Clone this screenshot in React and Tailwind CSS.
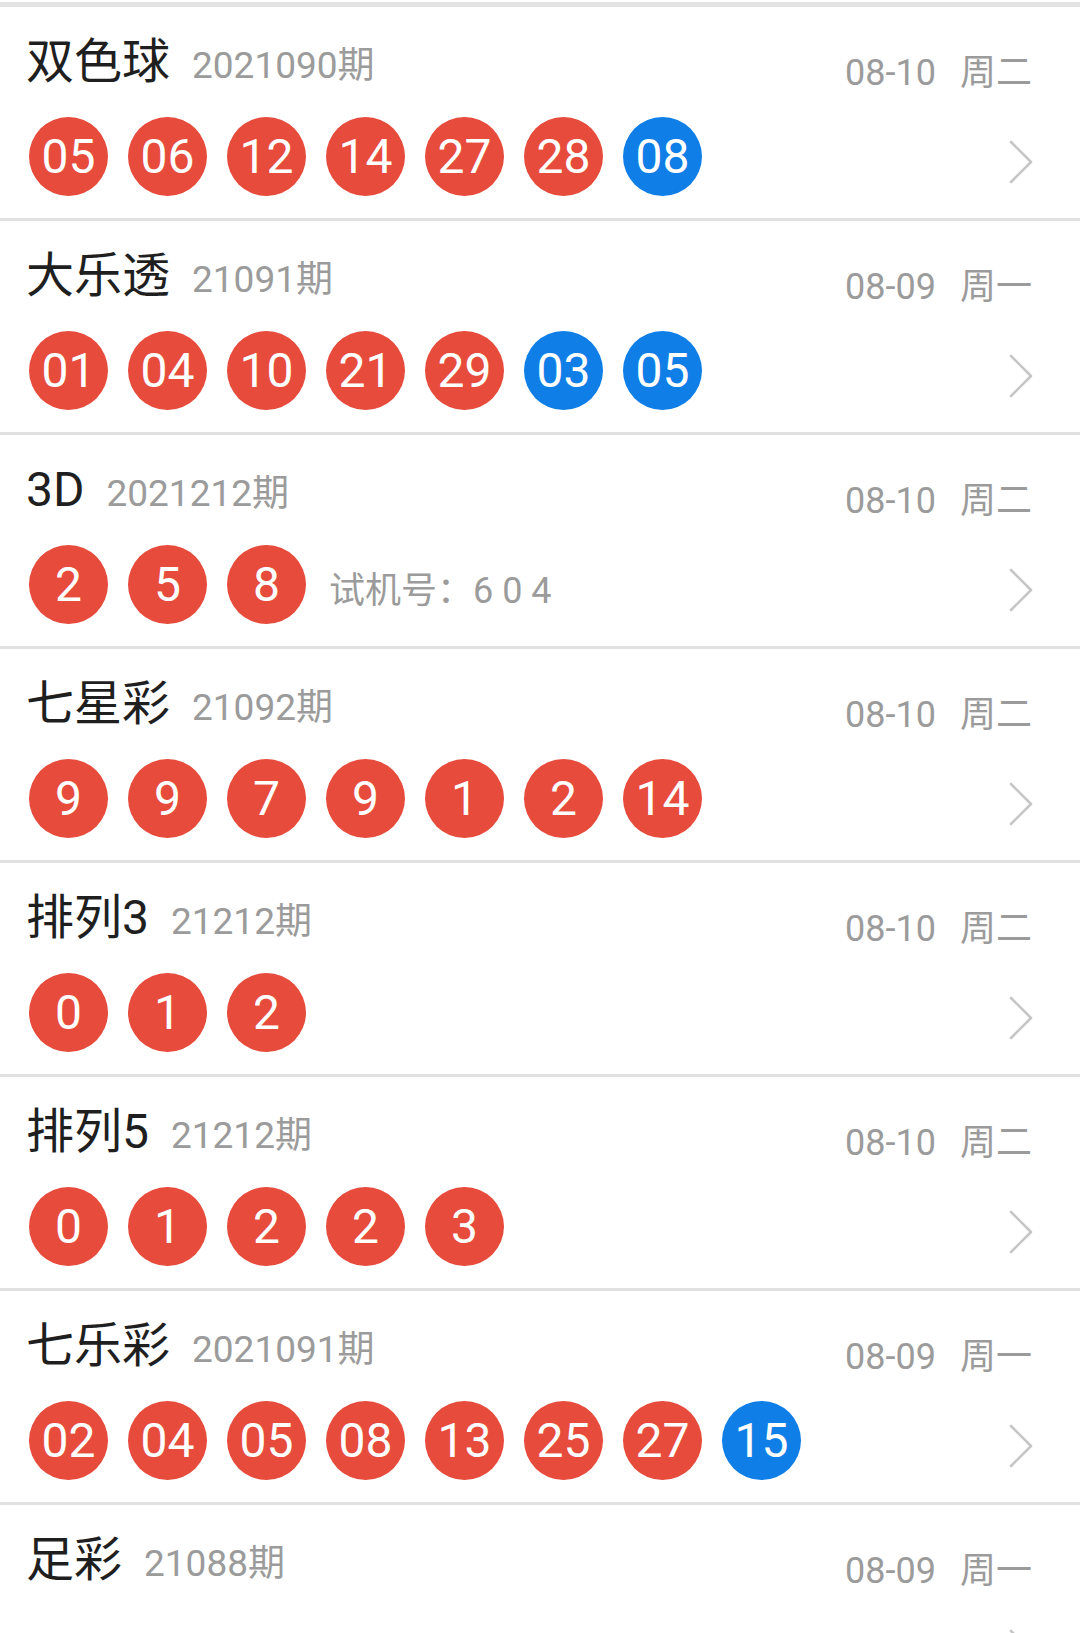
import React from 'react';

const DRAWS = [
  { name: '双色球', issue: '2021090期', date: '08-10', week: '周二', red: ['05', '06', '12', '14', '27', '28'], blue: ['08'] },
  { name: '大乐透', issue: '21091期', date: '08-09', week: '周一', red: ['01', '04', '10', '21', '29'], blue: ['03', '05'] },
  { name: '3D', issue: '2021212期', date: '08-10', week: '周二', red: ['2', '5', '8'], blue: [], extra: '试机号：6 0 4' },
  { name: '七星彩', issue: '21092期', date: '08-10', week: '周二', red: ['9', '9', '7', '9', '1', '2', '14'], blue: [] },
  { name: '排列3', issue: '21212期', date: '08-10', week: '周二', red: ['0', '1', '2'], blue: [] },
  { name: '排列5', issue: '21212期', date: '08-10', week: '周二', red: ['0', '1', '2', '2', '3'], blue: [] },
  { name: '七乐彩', issue: '2021091期', date: '08-09', week: '周一', red: ['02', '04', '05', '08', '13', '25', '27'], blue: ['15'] },
];

function Ball({ n, blue }) {
  return (
    <span
      className={`flex items-center justify-center w-[79px] h-[79px] rounded-full text-white text-[48px] leading-none
        ${blue ? 'bg-[#0f7ee6]' : 'bg-[#e64b3c]'}`}
    >
      {n}
    </span>
  );
}

function Chevron() {
  return (
    <svg width="26" height="44" viewBox="0 0 26 44" fill="none">
      <path d="M3 2 L23 22 L3 42" stroke="#c6c6c6" strokeWidth="2.6" strokeLinecap="round" strokeLinejoin="round" />
    </svg>
  );
}

function Header({ name, issue, date, week }) {
  return (
    <div className="flex justify-between">
      <div className="flex items-baseline leading-[58px]">
        <span className="text-[48px] text-[#1f1f1f]">{name}</span>
        <span className="ml-[22px] text-[37px] text-[#9b9b9b]">{issue}</span>
      </div>
      <div className="mt-[18px] text-[36px] leading-[44px] text-[#9b9b9b]">
        {date}
        <span className="ml-[24px]">{week}</span>
      </div>
    </div>
  );
}

function DrawRow({ d }) {
  return (
    <div className="h-[214px] border-b-[3px] border-[#e1e1e1] pl-[26px] pr-[48px] pt-[26px]">
      <Header {...d} />
      <div className="flex items-center justify-between mt-[22px]">
        <div className="flex items-center gap-[20px] pl-[3px]">
          {d.red.map((n, i) => <Ball key={'r' + i} n={n} />)}
          {d.blue.map((n, i) => <Ball key={'b' + i} n={n} blue />)}
          {d.extra && (
            <span className="ml-[3px] mt-[12px] text-[36px] text-[#9b9b9b]">{d.extra}</span>
          )}
        </div>
        <div className="mr-[-2px] mt-[10px]">
          <Chevron />
        </div>
      </div>
    </div>
  );
}

export default function App() {
  return (
    <div
      className="w-[1080px] h-[1633px] overflow-hidden bg-white"
      style={{ fontFamily: 'Roboto, "Noto Sans CJK SC", sans-serif' }}
    >
      <div className="h-[2px] bg-white" />
      <div className="h-[5px] bg-[#e3e3e3]" />
      {DRAWS.map(d => <DrawRow key={d.name} d={d} />)}

      {/* 足彩 – runs past the bottom of the screen */}
      <div className="pl-[26px] pr-[48px] pt-[26px]">
        <Header name="足彩" issue="21088期" date="08-09" week="周一" />
        <div className="flex items-start justify-between mt-[38px]">
          <span className="text-[36px] leading-[44px] text-[#333]">胜负彩 14场 任选9场 进球彩</span>
          <div className="mr-[-2px] mt-[-2px]">
            <Chevron />
          </div>
        </div>
      </div>
    </div>
  );
}
